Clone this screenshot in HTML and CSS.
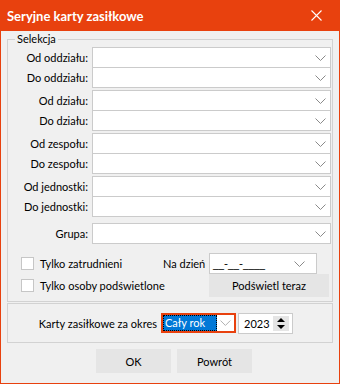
FILE: index.html
```html
<!DOCTYPE html>
<html lang="pl">
<head>
<meta charset="utf-8">
<title>Seryjne karty zasiłkowe</title>
<link rel="stylesheet" href="styles.css">
</head>
<body>
<div class="window">
  <div class="titlebar">
    <span class="title">Seryjne karty zasiłkowe</span>
    <svg class="close" width="11" height="11" viewBox="0 0 11 11"><path d="M0.5 0.5 L10.5 10.5 M10.5 0.5 L0.5 10.5" stroke="#fff" stroke-width="1.1" fill="none"/></svg>
  </div>
  <div class="body">
    <fieldset class="group sel">
      <legend>Selekcja</legend>
      <div class="pair">
        <div class="row"><span class="lbl">Od oddziału:</span><div class="combo"><svg class="chev" width="11" height="6" viewBox="0 0 11 6"><path d="M0.5 0.5 L5.5 5.5 L10.5 0.5" stroke="#8a8a8a" fill="none"/></svg></div></div>
        <div class="row"><span class="lbl">Do oddziału:</span><div class="combo"><svg class="chev" width="11" height="6" viewBox="0 0 11 6"><path d="M0.5 0.5 L5.5 5.5 L10.5 0.5" stroke="#8a8a8a" fill="none"/></svg></div></div>
      </div>
      <div class="pair">
        <div class="row"><span class="lbl">Od działu:</span><div class="combo"><svg class="chev" width="11" height="6" viewBox="0 0 11 6"><path d="M0.5 0.5 L5.5 5.5 L10.5 0.5" stroke="#8a8a8a" fill="none"/></svg></div></div>
        <div class="row"><span class="lbl">Do działu:</span><div class="combo"><svg class="chev" width="11" height="6" viewBox="0 0 11 6"><path d="M0.5 0.5 L5.5 5.5 L10.5 0.5" stroke="#8a8a8a" fill="none"/></svg></div></div>
      </div>
      <div class="pair">
        <div class="row"><span class="lbl">Od zespołu:</span><div class="combo"><svg class="chev" width="11" height="6" viewBox="0 0 11 6"><path d="M0.5 0.5 L5.5 5.5 L10.5 0.5" stroke="#8a8a8a" fill="none"/></svg></div></div>
        <div class="row"><span class="lbl">Do zespołu:</span><div class="combo"><svg class="chev" width="11" height="6" viewBox="0 0 11 6"><path d="M0.5 0.5 L5.5 5.5 L10.5 0.5" stroke="#8a8a8a" fill="none"/></svg></div></div>
      </div>
      <div class="pair">
        <div class="row"><span class="lbl">Od jednostki:</span><div class="combo"><svg class="chev" width="11" height="6" viewBox="0 0 11 6"><path d="M0.5 0.5 L5.5 5.5 L10.5 0.5" stroke="#8a8a8a" fill="none"/></svg></div></div>
        <div class="row"><span class="lbl">Do jednostki:</span><div class="combo"><svg class="chev" width="11" height="6" viewBox="0 0 11 6"><path d="M0.5 0.5 L5.5 5.5 L10.5 0.5" stroke="#8a8a8a" fill="none"/></svg></div></div>
      </div>
      <div class="row grupa"><span class="lbl">Grupa:</span><div class="combo"><svg class="chev" width="11" height="6" viewBox="0 0 11 6"><path d="M0.5 0.5 L5.5 5.5 L10.5 0.5" stroke="#8a8a8a" fill="none"/></svg></div></div>
      <div class="opts">
        <div class="check"><span class="box"></span><span>Tylko zatrudnieni</span></div>
        <span class="nalbl">Na dzień</span>
        <div class="date"><span class="mask">__-__-____</span><svg class="chev" width="11" height="6" viewBox="0 0 11 6"><path d="M0.5 0.5 L5.5 5.5 L10.5 0.5" stroke="#8a8a8a" fill="none"/></svg></div>
        <div class="check"><span class="box"></span><span>Tylko osoby podświetlone</span></div>
        <span></span>
        <div class="btn hl">Podświetl teraz</div>
      </div>
    </fieldset>
    <fieldset class="group okres">
      <span class="oklbl">Karty zasiłkowe za okres</span>
      <div class="focus-combo"><span class="sel-text">Cały rok</span><svg class="chev" width="11" height="6" viewBox="0 0 11 6"><path d="M0.5 0.5 L5.5 5.5 L10.5 0.5" stroke="#b0b0b0" fill="none"/></svg></div>
      <div class="spin"><span class="year">2023</span><div class="spin-btns"><svg width="16" height="15" viewBox="0 0 16 15"><path d="M4 6 L8 2 L12 6 Z M4 9 L8 13 L12 9 Z" fill="#000"/></svg></div></div>
    </fieldset>
    <div class="buttons">
      <div class="btn">OK</div>
      <div class="btn">Powrót</div>
    </div>
  </div>
</div>
</body>
</html>
```

FILE: styles.css
```css
* { box-sizing: border-box; }
html, body { margin: 0; padding: 0; }
body {
  font-family: Lato, "Segoe UI", "Noto Sans", sans-serif;
  font-size: 11px;
  color: #000;
  background: #f0f0f0;
}
.window {
  width: 340px;
  height: 384px;
  border: 1px solid #e8410e;
  border-top: 0;
  background: #f0f0f0;
  display: flex;
  flex-direction: column;
}
.titlebar {
  height: 31px;
  flex: none;
  background: #e8410e;
  color: #fff;
  display: flex;
  align-items: center;
  justify-content: space-between;
  padding: 0 17px 0 6px;
}
.title { font-weight: bold; font-size: 13px; }
.close { display: block; }
.body { padding: 0 6px; }
.group {
  margin: 0;
  padding: 0 1px 0 0;
  border: 1px solid #d2d2d2;
  min-width: 0;
}
.sel { padding-bottom: 4px; }
legend {
  margin-left: 7px;
  padding: 0 2px;
  line-height: 16px;
  height: 16px;
}
.pair + .pair { margin-top: 2px; }
.row {
  display: flex;
  align-items: center;
  height: 21px;
}
.pair .row + .row { margin-top: -1px; }
.grupa { margin-top: 6px; }
.lbl {
  width: 80px;
  margin-right: 4px;
  text-align: right;
  white-space: nowrap;
}
.combo {
  flex: 1;
  height: 21px;
  border: 1px solid #cbcbcb;
  background: #fff;
  display: flex;
  align-items: center;
  justify-content: flex-end;
  padding-right: 4px;
}
.chev { display: block; }
.opts {
  margin-top: 9px;
  padding-left: 13px;
  display: grid;
  grid-template-columns: 142px 46px 1fr;
  grid-template-rows: 21px 23px;
  align-items: center;
}
.check { display: flex; align-items: center; white-space: nowrap; }
.box {
  width: 13px;
  height: 13px;
  border: 1px solid #c6c6c6;
  background: #fff;
  margin-right: 6px;
  flex: none;
}
.nalbl { white-space: nowrap; }
.date {
  width: 108px;
  height: 21px;
  border: 1px solid #cbcbcb;
  background: #fff;
  display: flex;
  align-items: center;
  justify-content: space-between;
  padding: 0 11px 0 3px;
}
.mask { font-family: "DejaVu Sans", sans-serif; font-size: 11px; }
.btn {
  background: #e5e5e5;
  display: flex;
  align-items: center;
  justify-content: center;
  white-space: nowrap;
}
.hl { width: 120px; height: 23px; }
.okres {
  margin-top: 1px;
  height: 40px;
  display: flex;
  align-items: center;
  padding: 0;
}
.oklbl {
  width: 149px;
  margin-right: 4px;
  text-align: right;
  white-space: nowrap;
}
.focus-combo {
  width: 75px;
  height: 20px;
  border: 2px solid #e8410e;
  background: #fff;
  display: flex;
  align-items: center;
  padding-right: 3px;
}
.sel-text {
  width: 55px;
  height: 16px;
  background: #0078d7;
  color: #fff;
  border: 1px dotted #000;
  line-height: 14px;
  padding-left: 1px;
  margin-right: 3px;
}
.spin {
  width: 55px;
  height: 21px;
  margin-left: 2px;
  border: 1px solid #cbcbcb;
  background: #fff;
  display: flex;
  align-items: center;
  justify-content: space-between;
  padding: 0 3px 0 5px;
}
.spin-btns {
  width: 16px;
  height: 15px;
  background: #e5e5e5;
}
.spin-btns svg { display: block; }
.buttons {
  display: flex;
  gap: 6px;
  margin-top: 6px;
  padding-left: 89px;
}
.buttons .btn { width: 75px; height: 24px; }
```
